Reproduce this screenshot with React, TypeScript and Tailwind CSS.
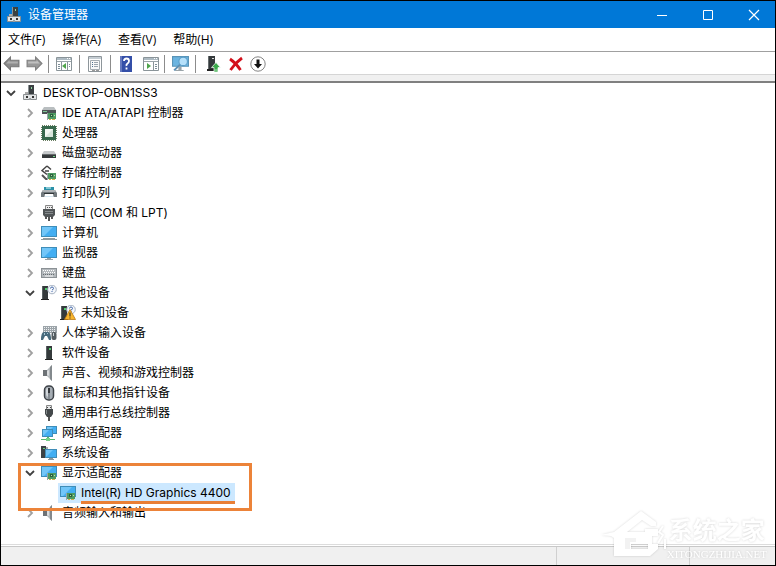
import React, { useState } from 'react';

type Node = {
  label: string;
  icon: React.ReactNode;
  children?: Node[];
  closed?: boolean;
  selected?: boolean;
  marked?: boolean;
};

const Svg: React.FC<{ children: React.ReactNode; className?: string; box?: string }> = ({
  children,
  className = 'size-4',
  box = '0 0 16 16',
}) => (
  <svg viewBox={box} className={`${className} shrink-0`} aria-hidden="true">
    {children}
  </svg>
);

// small green circuit board shared by several device icons
const Board = () => (
  <g>
    <path d="M6 8h9v6h-1v1h-2v-1H6z" fill="#4f9a62" />
    <path d="M6 8h1v7H6z" fill="#9aa5a8" />
    <path d="M9 9h3v3H9z" fill="#2b5f40" />
    <path d="M10 10h1v1h-1zM13 10h1v1h-1z" fill="#b8e0a0" />
    <path d="M8 14h2v1H8zM11 14h3v1h-3z" fill="#d6ae45" />
  </g>
);

const Screen: React.FC<{ x?: number; y?: number; w?: number; h?: number }> = ({ x = 0, y = 2, w = 16, h = 10 }) => (
  <g>
    <rect x={x} y={y} width={w} height={h} fill="#3f8db8" />
    <rect x={x + 1} y={y + 1} width={w - 2} height={h - 2} fill="#43aef2" />
    <path d={`M${x + 1} ${y + 1}h${w - 5}l-${h - 2} ${h - 2}h-${Math.max(w - h - 3, 0)}z`} fill="#72c6f8" />
  </g>
);

const Tower: React.FC<{ x?: number }> = ({ x = 1 }) => (
  <g>
    <path d={`M${x} 1h6v14h-6z`} fill="#34393b" />
    <path d={`M${x} 1h1v14h-1z`} fill="#596163" />
    <path d={`M${x + 3} 3h2v2h-2z`} fill="#4fce6b" />
    <path d={`M${x - 1} 14h8v1h-8z`} fill="#222" />
  </g>
);

const ComputerIcon = () => (
  <Svg>
    <path d="M6 0h6v9H6z" fill="#3b4042" />
    <path d="M6 0h1v9H6z" fill="#8b9294" />
    <path d="M9 2h1v2H9z" fill="#8fd9a3" />
    <path d="M3 7h3v2H3z" fill="#aaa" />
    <path d="M1.500 9.500h13v5h-13z" fill="#e3e5e6" stroke="#8b8f91" />
    <path d="M4 11h2v2H4zM10 11h2v2h-2z" fill="#333" />
    <path d="M7 13h2v2H7z" fill="#9ba0a2" />
  </Svg>
);

const IdeIcon = () => (
  <Svg>
    <path d="M3 2h10l2 3H1z" fill="#b9bec0" />
    <path d="M1 5h14v4H1z" fill="#4d5354" />
    <path d="M2 6h4v1H2z" fill="#7ec894" />
    <Board />
  </Svg>
);

const CpuIcon = () => (
  <Svg>
    <rect x="1" y="1" width="14" height="14" fill="none" stroke="#6b7f62" strokeWidth="2" strokeDasharray="1 1" />
    <rect x="1" y="1" width="14" height="14" fill="#37684d" />
    <rect x="4" y="4" width="8" height="8" fill="#d9e6dd" />
    <path d="M4 12V4h8z" fill="#f4f8f4" />
  </Svg>
);

const DiskIcon = () => (
  <Svg>
    <path d="M3 6h10l2 3H1z" fill="#c6c9cb" />
    <path d="M1 9h14v4H1z" fill="#35393b" />
    <path d="M1 9h14v1H1z" fill="#676c6e" />
    <path d="M12 11h2v1h-2z" fill="#71d688" />
  </Svg>
);

const StorageIcon = () => (
  <Svg>
    <path d="M6 1L1 5.500l5 4M6 1l4 3.500M4 6h4" fill="none" stroke="#444" strokeWidth="1.500" />
    <path d="M1 10l4 4h2" fill="none" stroke="#555" strokeWidth="2" />
    <Board />
  </Svg>
);

const PrinterIcon = () => (
  <Svg>
    <path d="M3 2h10v3H3z" fill="#2b91a8" />
    <path d="M5 2h5v2H5z" fill="#85c7d4" />
    <path d="M2 5h12l2 3v4H0V8z" fill="#72797d" />
    <path d="M2 5h12l1 2H1z" fill="#adb2b5" />
    <path d="M3 8h10v1H3z" fill="#303638" />
    <path d="M4 9h8l1 5H3z" fill="#fff" />
    <path d="M4 11h8v1H4z" fill="#d8e8f2" />
  </Svg>
);

const PortIcon = () => (
  <Svg>
    <path d="M4.500.5h7v4h-7z" fill="#eee" stroke="#888" />
    <path d="M6 2h1v1H6zM8 2h1v1H8zM10 2h1v1h-1z" fill="#555" />
    <path d="M2 4h12v6l-2 2H4l-2-2z" fill="#515557" />
    <path d="M4 6.500h8M4 8.500h8" stroke="#858a8c" />
    <path d="M4 12h2v2H4zM7 12h2v4H7zM10 12h2v2h-2z" fill="#555" />
  </Svg>
);

const PcIcon = () => (
  <Svg>
    <Screen y={1} h={11} />
    <path d="M2 14h12v-1H2zM0 15h16v-1H0z" fill="#8f999d" />
  </Svg>
);

const MonitorIcon = () => (
  <Svg>
    <Screen y={2} h={11} />
    <path d="M6 13h4v1h2v1H4v-1h2z" fill="#9aa4a8" />
  </Svg>
);

const KeyboardIcon = () => (
  <Svg>
    <rect x="0" y="3" width="16" height="10" fill="#8b9195" />
    <rect x="1" y="4" width="14" height="8" fill="#b4b9bd" />
    <path d="M2 5.500h12M3 7.500h11" stroke="#fff" strokeDasharray="1 1" />
    <path d="M2 9.500h12" stroke="#666c70" strokeDasharray="1 1" />
    <path d="M4 11h8" stroke="#f7f7f7" />
  </Svg>
);

const Bubble = () => (
  <g>
    <circle cx="11" cy="4.500" r="4.300" fill="#f3f6fb" stroke="#a6b2c2" />
    <path d="M9.500 3.500Q9.500 2 11 2t1.500 1.500q0 1-1.500 1.500M11 6v1" fill="none" stroke="#4569a8" />
  </g>
);

const OtherIcon = () => (
  <Svg>
    <Tower />
    <Bubble />
  </Svg>
);

const UnknownIcon = () => (
  <Svg>
    <Tower />
    <Bubble />
    <path d="M10 4.500l5.500 10h-11z" fill="#f9b52b" stroke="#b77716" strokeWidth=".8" />
    <path d="M9.500 7.500h1v4h-1zM9.500 12.500h1v1h-1z" fill="#222" />
  </Svg>
);

const HidIcon = () => (
  <Svg>
    <rect x="2" y="1" width="14" height="7" fill="#9ca4a9" />
    <path d="M3 2.500h12M3 4.500h12M3 6.500h12" stroke="#eceff1" strokeDasharray="1 1" />
    <path d="M0 15q0-8 3-8h4q3 0 3 8H8l-2-4H4l-2 4z" fill="#476a7c" />
    <path d="M3 8h1v2H3zM6 8h1v1H6z" fill="#a7c6d4" />
    <rect x="10.500" y="7" width="5" height="8" rx="2" fill="#555d61" />
    <path d="M12 8h1v3h-1z" fill="#c8d1d6" />
  </Svg>
);

const SoftwareIcon = () => (
  <Svg>
    <Tower x={5} />
  </Svg>
);

const SpeakerIcon = () => (
  <Svg>
    <path d="M2 5h4v6H2z" fill="#6d7276" />
    <path d="M6 5l5-5v16l-5-5z" fill="#b4b9bc" />
    <path d="M9 2l2-2v16l-2-2z" fill="#83898d" />
    <path d="M6 6l2-1v6l-2-1z" fill="#dadddf" />
  </Svg>
);

const MouseIcon = () => (
  <Svg>
    <rect x="3.500" y="1" width="9" height="14" rx="4" fill="#a5acb3" stroke="#3c4147" strokeWidth="1.500" />
    <path d="M5 5q0-2 2-2v9q-2-1-2-3z" fill="#d2d7db" />
    <path d="M7 3h2v5H7z" fill="#34383c" />
    <path d="M8 8v6" stroke="#666d73" />
  </Svg>
);

const UsbIcon = () => (
  <Svg>
    <path d="M5.500.5h5v4h-5z" fill="#e5e7e8" stroke="#888" />
    <path d="M6 2h1v1H6zM9 2h1v1H9z" fill="#444" />
    <path d="M4 4h8v5l-2 3H6L4 9z" fill="#44494b" />
    <path d="M5 5h1v4H5z" fill="#858b8d" />
    <path d="M7 12h2v4H7z" fill="#555" />
  </Svg>
);

const NetworkIcon = () => (
  <Svg>
    <Screen x={5} y={1} w={11} h={8} />
    <Screen x={1} y={4} w={11} h={8} />
    <path d="M6 12h2v1H6zM0 14h14v1H0z" fill="#55b96d" />
    <path d="M5 13h4v3H5z" fill="#78cf89" />
  </Svg>
);

const SystemIcon = () => (
  <Svg>
    <path d="M0 1h5v12H0z" fill="#3b4245" />
    <path d="M2 3h2v1H2z" fill="#65d57e" />
    <path d="M5 2h2v2H5z" fill="#a5abad" />
    <Screen x={4} y={4} w={12} h={9} />
    <path d="M8 13h4v1h1v1H7v-1h1z" fill="#8b979c" />
  </Svg>
);

const DisplayIcon = () => (
  <Svg>
    <Screen y={1} h={11} />
    <Board />
  </Svg>
);

const root: Node = {
  label: 'DESKTOP-OBN1SS3',
  icon: <ComputerIcon />,
  children: [
    { label: 'IDE ATA/ATAPI 控制器', icon: <IdeIcon />, closed: true },
    { label: '处理器', icon: <CpuIcon />, closed: true },
    { label: '磁盘驱动器', icon: <DiskIcon />, closed: true },
    { label: '存储控制器', icon: <StorageIcon />, closed: true },
    { label: '打印队列', icon: <PrinterIcon />, closed: true },
    { label: '端口 (COM 和 LPT)', icon: <PortIcon />, closed: true },
    { label: '计算机', icon: <PcIcon />, closed: true },
    { label: '监视器', icon: <MonitorIcon />, closed: true },
    { label: '键盘', icon: <KeyboardIcon />, closed: true },
    { label: '其他设备', icon: <OtherIcon />, children: [{ label: '未知设备', icon: <UnknownIcon /> }] },
    { label: '人体学输入设备', icon: <HidIcon />, closed: true },
    { label: '软件设备', icon: <SoftwareIcon />, closed: true },
    { label: '声音、视频和游戏控制器', icon: <SpeakerIcon />, closed: true },
    { label: '鼠标和其他指针设备', icon: <MouseIcon />, closed: true },
    { label: '通用串行总线控制器', icon: <UsbIcon />, closed: true },
    { label: '网络适配器', icon: <NetworkIcon />, closed: true },
    { label: '系统设备', icon: <SystemIcon />, closed: true },
    {
      label: '显示适配器',
      icon: <DisplayIcon />,
      marked: true,
      children: [{ label: 'Intel(R) HD Graphics 4400', icon: <DisplayIcon />, selected: true }],
    },
    { label: '音频输入和输出', icon: <SpeakerIcon />, closed: true },
  ],
};

const TreeItem: React.FC<{ node: Node }> = ({ node }) => {
  const [open, setOpen] = useState(!node.closed);
  const expandable = node.closed || node.children;

  return (
    <li className="relative">
      <div className="flex h-5 items-center">
        {expandable ? (
          <button
            onClick={() => setOpen(!open)}
            aria-expanded={open}
            aria-label={node.label}
            className="mr-px flex size-4 shrink-0 items-center justify-center"
          >
            <Svg className="size-3" box="0 0 12 12">
              {open ? (
                <path d="M2 4l4 4 4-4" fill="none" stroke="#404040" strokeWidth="1.800" />
              ) : (
                <path d="M4 2l4 4-4 4" fill="none" stroke="#a0a0a0" strokeWidth="1.800" />
              )}
            </Svg>
          </button>
        ) : (
          <span className="mr-px size-4 shrink-0" />
        )}
        <div className={`flex h-5 items-center gap-[5px] pr-1 pl-0.5 ${node.selected ? 'bg-[#cce8ff]' : ''}`}>
          {node.icon}
          <span className="relative whitespace-nowrap">
            {node.label}
            {node.selected && <span className="absolute top-full -right-1 left-0 h-[3px] bg-[#e97f35]" />}
          </span>
        </div>
      </div>
      {open && node.children && (
        <ul className="pl-[19px]">
          {node.children.map((child) => (
            <TreeItem key={child.label} node={child} />
          ))}
        </ul>
      )}
      {node.marked && (
        <div className="pointer-events-none absolute top-0 -bottom-2 -left-1 z-10 w-[234px] border-3 border-[#ec8339]" />
      )}
    </li>
  );
};

const ToolButton: React.FC<{ label: string; className?: string; children: React.ReactNode }> = ({
  label,
  className = 'w-[26px]',
  children,
}) => (
  <button aria-label={label} title={label} className={`flex h-5 shrink-0 items-center justify-center ${className}`}>
    {children}
  </button>
);

const Divider = () => <span className="mx-0.5 h-[18px] w-px shrink-0 bg-[#8c8c8c]" />;

const PanelIcon: React.FC<{ flip?: boolean }> = ({ flip }) => (
  <Svg>
    <path d="M.5 1.500h15v13H.5z" fill="#fff" stroke="#8a9499" />
    <path d="M1 2h14v2H1z" fill="#aebbc3" />
    <path d="M11 2h1v1h-1zM13 2h1v1h-1z" fill="#fff" />
    <path d="M1 5.500h14" stroke="#9ba5aa" />
    {flip ? (
      <g>
        <path d="M10.500 6v8" stroke="#8a9499" />
        <path d="M12 8.500h2M12 10.500h2M12 12.500h2" stroke="#7c8d97" />
        <path d="M4 7l4 3-4 3z" fill="#4fa54b" />
      </g>
    ) : (
      <g>
        <path d="M5.500 6v8M11.500 6v8" stroke="#8a9499" />
        <path d="M2 8.500h2M2 10.500h2M2 12.500h2M13 8.500h1M13 10.500h1" stroke="#7c8d97" />
        <path d="M10 7l-4 3 4 3z" fill="#4fa54b" />
      </g>
    )}
  </Svg>
);

const Toolbar = () => (
  <div className="flex h-[23px] items-center border-t border-[#a0a0a0] pt-px" role="toolbar">
    <ToolButton label="后退" className="w-[21px]">
      <Svg className="size-[17px]">
        <path d="M1 8l6-6v3h8v6H7v3z" fill="#8c8c8c" stroke="#777" />
        <path d="M3 8l3-3v1h8v2z" fill="#b0b0b0" />
      </Svg>
    </ToolButton>
    <ToolButton label="前进" className="w-6">
      <Svg className="size-[17px]">
        <path d="M15 8L9 2v3H1v6h8v3z" fill="#999" stroke="#808080" />
        <path d="M13 8l-3-3v1H2v2z" fill="#c0c0c0" />
      </Svg>
    </ToolButton>
    <Divider />
    <ToolButton label="显示控制台树">
      <PanelIcon />
    </ToolButton>
    <Divider />
    <ToolButton label="属性">
      <Svg>
        <path d="M1.500.5h13v15h-13z" fill="#fff" stroke="#8e969b" />
        <path d="M2 1h12v2H2z" fill="#c5cdd3" />
        <path d="M3.500 4.500h9v9h-9z" fill="#f7f8f8" stroke="#a4acb1" />
        <path d="M5 6.500h1M5 8.500h1M5 10.500h1" stroke="#4f7190" />
        <path d="M7 6.500h4M7 8.500h4M7 10.500h4" stroke="#99a4ac" />
        <path d="M5 14.500h3M9 14.500h3" stroke="#999" />
      </Svg>
    </ToolButton>
    <Divider />
    <ToolButton label="帮助">
      <Svg>
        <path d="M2 0h12v16H2z" fill="#344fa8" />
        <path d="M2 0h2v16H2z" fill="#6579bf" />
        <path d="M6 5q0-2.500 2.500-2.500T11 5q0 1.500-1.500 2.500T8.500 10M8.500 11.500v2" fill="none" stroke="#fff" strokeWidth="1.800" />
      </Svg>
    </ToolButton>
    <ToolButton label="显示操作窗格" className="w-[23px]">
      <PanelIcon flip />
    </ToolButton>
    <Divider />
    <ToolButton label="扫描检测硬件改动">
      <Svg className="size-[17px]">
        <path d="M.5 1.500h15v9H.5z" fill="#6bb4e0" stroke="#5994b7" />
        <path d="M3 14h8v1H3zM6 11h3v3H6z" fill="#9aa4a9" />
        <circle cx="10.500" cy="6" r="4" fill="#b5e0fa" stroke="#5a9dc8" />
        <path d="M7.500 9L2 14.500" stroke="#5b8fb4" strokeWidth="1.800" />
      </Svg>
    </ToolButton>
    <Divider />
    <ToolButton label="更新驱动程序软件" className="w-[30px]">
      <Svg>
        <path d="M3 0h7v14H3z" fill="#34393b" />
        <path d="M3 0h1v14H3z" fill="#686e70" />
        <path d="M7 2h2v1H7z" fill="#ddd" />
        <path d="M2 13h7v2H2z" fill="#222" />
        <path d="M11 6.500l4.500 5H13V16H9v-4.500H6.500z" fill="#3cab4c" stroke="#fff" strokeWidth=".7" />
        <path d="M9 14h4" stroke="#a5dfad" />
      </Svg>
    </ToolButton>
    <ToolButton label="卸载" className="w-4">
      <Svg>
        <path d="M2 3q6 4 10.500 11M14 2Q7 7 2.500 14" fill="none" stroke="#d3101b" strokeWidth="2.800" />
      </Svg>
    </ToolButton>
    <ToolButton label="禁用" className="w-7">
      <Svg>
        <circle cx="8" cy="8" r="7.200" fill="#fff" stroke="#858585" />
        <path d="M6.500 3.500h3V8H12l-4 4.500L4 8h2.500z" fill="#111" />
      </Svg>
    </ToolButton>
  </div>
);

// white site mark drawn over the lower right corner
const Watermark = () => (
  <div className="pointer-events-none absolute right-2 bottom-1 flex items-center text-white drop-shadow-[0_0_1px_rgba(0,0,0,0.16)]">
    <Svg className="h-[50px] w-[66px]" box="0 0 66 50">
      <path
        d="M0 24l13-3L40 0l15 11v4h-5l-9-6-15 12h18v-3h13v7h-6v8H30v5h17v-5h10v5l-8 7H13V27l-3-2z"
        fill="#fff"
      />
      <path d="M24 27h11v4h-6v7h-5z" fill="#f2f2f2" />
      <path d="M62 15l-4 6 4 3-5 8M64 28v10" fill="none" stroke="#fff" strokeWidth="2" />
    </Svg>
    <div className="flex flex-col items-center">
      <span className="text-[24px] leading-9 font-bold">系统之家</span>
      <span className="font-['Liberation_Serif',serif] text-[11px] leading-3">XITONGZHIJIA.NET</span>
    </div>
  </div>
);

export default function App() {
  return (
    <div className="relative flex min-h-screen flex-col overflow-hidden border border-black bg-white font-['Open_Sans','Noto_Sans_CJK_SC',sans-serif] text-[12px] leading-4 text-black">
      <header className="flex h-[27px] items-center bg-[#0078d7] pl-[5px] text-white">
        <ComputerIcon />
        <h1 className="ml-1.5 flex-1">设备管理器</h1>
        <button aria-label="最小化" className="flex h-full w-[46px] items-center justify-center">
          <Svg className="size-3" box="0 0 12 12">
            <path d="M1 6.500h10" stroke="#fff" />
          </Svg>
        </button>
        <button aria-label="最大化" className="flex h-full w-[46px] items-center justify-center">
          <Svg className="size-3" box="0 0 12 12">
            <path d="M1.500 1.500h9v9h-9z" fill="none" stroke="#fff" />
          </Svg>
        </button>
        <button aria-label="关闭" className="ml-0.5 flex h-full w-[42px] items-center justify-center">
          <Svg className="size-3" box="0 0 12 12">
            <path d="M1 1l10 10M11 1L1 11" stroke="#fff" strokeWidth="1.200" />
          </Svg>
        </button>
      </header>

      <nav className="flex h-[23px] items-center gap-[17px] pl-[7px]">
        <button>文件(F)</button>
        <button>操作(A)</button>
        <button>查看(V)</button>
        <button>帮助(H)</button>
      </nav>

      <Toolbar />
      <div className="h-[9px] border-t border-b-2 border-t-[#d5d5d5] border-b-[#808080] bg-[#f0f0f0]" />

      <main className="flex-1 pl-0.5 font-['Inter','Noto_Sans_CJK_SC',sans-serif]">
        <ul>
          <TreeItem node={root} />
        </ul>
      </main>

      <div className="h-0.5 border-t border-[#dcdcdc]" />
      <footer className="flex h-[19px] border-t border-[#c8c8c8] bg-[#f0f0f0]">
        <div className="flex-1 border-r border-[#d0d0d0]" />
        <div className="w-[133px] border-r border-[#d0d0d0]" />
        <div className="w-[85px]" />
      </footer>
      <Watermark />
    </div>
  );
}
